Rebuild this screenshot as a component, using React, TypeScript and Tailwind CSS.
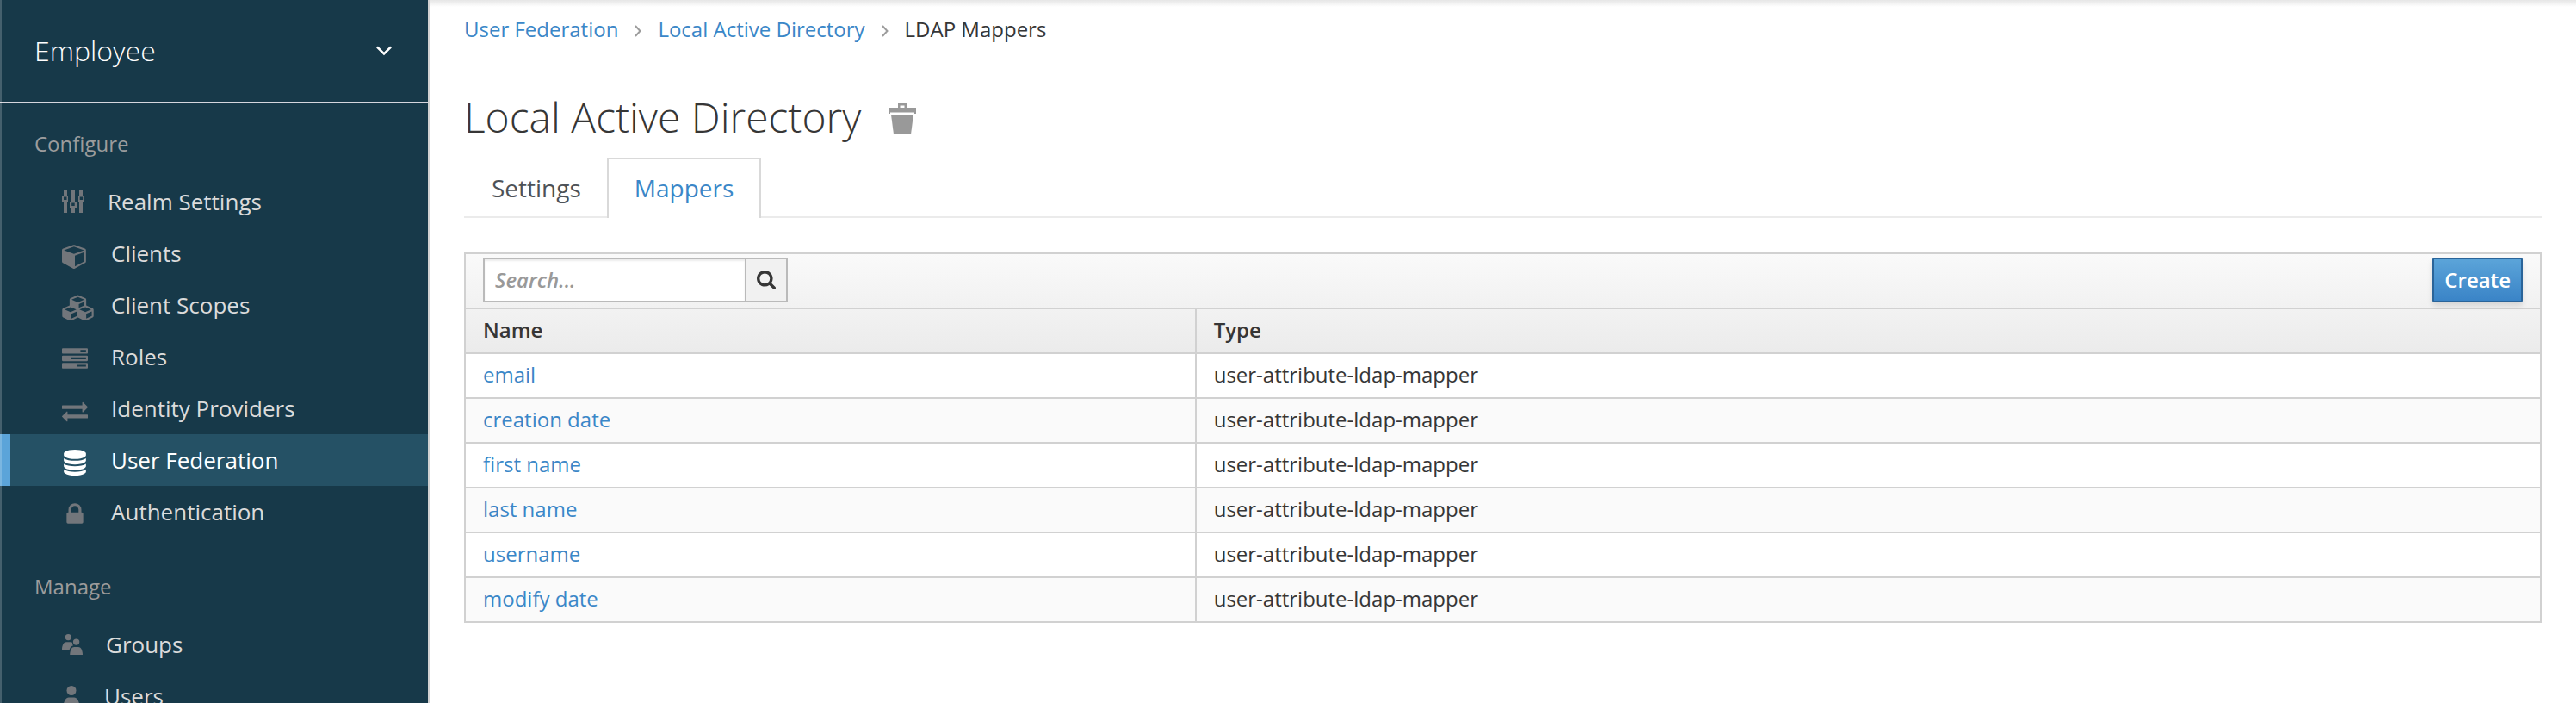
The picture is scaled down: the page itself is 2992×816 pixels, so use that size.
import type { ReactNode } from "react";

type IconProps = { viewBox: string; className: string; children: ReactNode };

function Icon({ viewBox, className, children }: IconProps) {
  return (
    <svg viewBox={viewBox} className={className} fill="currentColor" aria-hidden="true">
      {children}
    </svg>
  );
}

const CUBE =
  "M896 1629l640-349v-636l-640 233v752zm-64-865l698-254-698-254-698 254zm832-252v768q0 35-18 65t-49 47l-704 384q-28 16-61 16t-61-16l-704-384q-31-17-49-47t-18-65v-768q0-40 23-73t61-47l704-256q22-8 44-8t44 8l704 256q38 14 61 47t23 73z";
const CUBES =
  "M576 1664l384-192v-314l-384 164v342zm-64-454l404-173-404-173-404 173zm1088 454l384-192v-314l-384 164v342zm-64-454l404-173-404-173-404 173zm-448-293l384-165v-266l-384 164v267zm-64-379l441-189-441-189-441 189zm1088 518v416q0 36-19 67t-52 47l-448 224q-25 14-57 14t-57-14l-448-224q-4-2-7-4-2 2-7 4l-448 224q-25 14-57 14t-57-14l-448-224q-33-16-52-47t-19-67v-416q0-38 21.5-70t56.5-48l434-186v-400q0-38 21.5-70t56.5-48l448-192q23-10 50-10t50 10l448 192q35 16 56.5 48t21.5 70v400l434 186q36 16 57 48t21 70z";
const TASKS =
  "M1024 1408h640v-128h-640v128zm-384-512h1024v-128h-1024v128zm640-512h384v-128h-384v128zm512 832v256q0 26-19 45t-45 19h-1664q-26 0-45-19t-19-45v-256q0-26 19-45t45-19h1664q26 0 45 19t19 45zm0-512v256q0 26-19 45t-45 19h-1664q-26 0-45-19t-19-45v-256q0-26 19-45t45-19h1664q26 0 45 19t19 45zm0-512v256q0 26-19 45t-45 19h-1664q-26 0-45-19t-19-45v-256q0-26 19-45t45-19h1664q26 0 45 19t19 45z";
const EXCHANGE =
  "M1792 1184v192q0 13-9.5 22.5t-22.5 9.5h-1376v192q0 13-9.5 22.5t-22.5 9.5q-12 0-24-10l-319-320q-9-9-9-22 0-14 9-23l320-320q9-9 23-9 13 0 22.5 9.5t9.5 22.5v192h1376q13 0 22.5 9.5t9.5 22.5zm0-544q0 14-9 23l-320 320q-9 9-23 9-13 0-22.5-9.5t-9.5-22.5v-192h-1376q-13 0-22.5-9.5t-9.5-22.5v-192q0-13 9.5-22.5t22.5-9.5h1376v-192q0-14 9-23t23-9q12 0 24 10l319 319q9 9 9 23z";
const DATABASE =
  "M896 768q237 0 443-43t325-127v170q0 69-103 128t-280 93.5-385 34.5-385-34.5-280-93.5-103-128v-170q119 84 325 127t443 43zm0 768q237 0 443-43t325-127v170q0 69-103 128t-280 93.5-385 34.5-385-34.5-280-93.5-103-128v-170q119 84 325 127t443 43zm0-384q237 0 443-43t325-127v170q0 69-103 128t-280 93.5-385 34.5-385-34.5-280-93.5-103-128v-170q119 84 325 127t443 43zm0-1152q208 0 385 34.5t280 93.5 103 128v128q0 69-103 128t-280 93.5-385 34.5-385-34.5-280-93.5-103-128v-128q0-69 103-128t280-93.5 385-34.5z";
const LOCK =
  "M640 768h512v-192q0-106-75-181t-181-75-181 75-75 181v192zm832 96v576q0 40-28 68t-68 28h-960q-40 0-68-28t-28-68v-576q0-40 28-68t68-28h32v-192q0-184 132-316t316-132 316 132 132 316v192h32q40 0 68 28t28 68z";
const SEARCH =
  "M1216 832q0-185-131.5-316.5t-316.5-131.5-316.5 131.5-131.5 316.5 131.5 316.5 316.5 131.5 316.5-131.5 131.5-316.5zm512 832q0 52-38 90t-90 38q-54 0-90-38l-343-342q-179 124-399 124-143 0-273.5-55.5t-225-150-150-225-55.5-273.5 55.5-273.5 150-225 225-150 273.5-55.5 273.5 55.5 225 150 150 225 55.5 273.5q0 220-124 399l343 343q37 37 37 90z";

function GlyphIcon({ d }: { d: string }) {
  return (
    <Icon viewBox="0 0 1792 1792" className="mt-1.5 h-[30px] w-[30px]">
      <path d={d} />
    </Icon>
  );
}

function SlidersIcon() {
  return (
    <Icon viewBox="0 0 26 26" className="h-[26px] w-[26px]">
      <path
        fillRule="evenodd"
        d="M2 0h4v6h1v7h-1v13h-4v-13h-2v-7h2zM2 7.500v3.500h3.500v-3.500zM11 0h4v13h2v7h-2v6h-4v-6h-2v-7h2zM11.200 14.500v3.500h3.500v-3.500zM20 0h4v6h2v7h-2v13h-4v-13h-1v-7h1zM20.700 7.500v3.500h3.500v-3.500z"
      />
    </Icon>
  );
}

function GroupIcon() {
  return (
    <Icon viewBox="0 0 24 24" className="h-6 w-6">
      <circle cx="7.300" cy="3.600" r="3.600" />
      <path d="M0 18.500C0 12.500 2.200 9.300 5 9.300h5.200c.8 0 1.400.2 1.900.6-.4 1.200.1 2.400.9 3.300-2.300.6-3.900 2.600-4.500 5.300z" />
      <circle cx="16.600" cy="9.100" r="3.700" />
      <path d="M9.200 24.200c0-6 2.200-9.300 5-9.300h4.800c2.800 0 5 3.300 5 9.300z" />
    </Icon>
  );
}

function UserIcon() {
  return (
    <Icon viewBox="0 0 24 30" className="h-[30px] w-6">
      <circle cx="11" cy="8.500" r="5.500" />
      <path d="M1.200 31c0-9 2.800-14.500 6.500-14.500h6.600c3.700 0 6.500 5.500 6.500 14.500z" />
    </Icon>
  );
}

type NavItem = { label: string; icon: ReactNode; slot: string; active?: boolean };

const configure: NavItem[] = [
  { label: "Realm Settings", icon: <SlidersIcon />, slot: "w-8" },
  { label: "Clients", icon: <GlyphIcon d={CUBE} />, slot: "w-9" },
  {
    label: "Client Scopes",
    icon: (
      <Icon viewBox="-64 0 2176 1792" className="mt-1.5 h-[30px] w-[37px] shrink-0">
        <path d={CUBES} />
      </Icon>
    ),
    slot: "w-9",
  },
  { label: "Roles", icon: <GlyphIcon d={TASKS} />, slot: "w-9" },
  { label: "Identity Providers", icon: <GlyphIcon d={EXCHANGE} />, slot: "w-9" },
  { label: "User Federation", icon: <GlyphIcon d={DATABASE} />, slot: "w-9", active: true },
  { label: "Authentication", icon: <GlyphIcon d={LOCK} />, slot: "w-9" },
];

const manage: NavItem[] = [
  { label: "Groups", icon: <GroupIcon />, slot: "w-[30px]" },
  { label: "Users", icon: <UserIcon />, slot: "w-7" },
];

function NavSection({ title, items }: { title: string; items: NavItem[] }) {
  return (
    <section className="mb-2.5 pt-[30px]">
      <h2 className="mb-5 pl-10 text-[24px] leading-[34px] text-[#9c9c9c]">{title}</h2>
      <ul>
        {items.map((item) => (
          <li key={item.label}>
            <a
              href="#"
              aria-current={item.active ? "page" : undefined}
              className={
                item.active
                  ? "flex h-[60px] items-center gap-[21px] border-l-12 border-[#5ba4d9] bg-[#255165] pl-[60px] text-[26px] text-white"
                  : "flex h-[60px] items-center gap-[21px] pl-[72px] text-[26px] text-[#dbdbdb]"
              }
            >
              <span className={`flex shrink-0 items-center ${item.slot} ${item.active ? "text-white" : "text-[#72767b]"}`}>
                {item.icon}
              </span>
              {item.label}
            </a>
          </li>
        ))}
      </ul>
    </section>
  );
}

function Sidebar() {
  return (
    <aside className="relative w-[499px] shrink-0 overflow-hidden border-r-2 border-[#d1d1d1] bg-[#173949]">
      <button
        type="button"
        className="flex h-[120px] w-full items-center justify-between border-b-2 border-[#d6d6de] pr-[42px] pl-10 text-[32px] font-light text-white"
      >
        Employee
        <svg viewBox="0 0 18 12" className="h-3 w-[18px]" fill="none" stroke="currentColor" strokeWidth="2.500" aria-hidden="true">
          <path d="M1 1.500l8 8 8-8" />
        </svg>
      </button>
      <nav>
        <NavSection title="Configure" items={configure} />
        <NavSection title="Manage" items={manage} />
      </nav>
      <div className="pointer-events-none absolute inset-y-0 left-0 w-0.5 bg-white/20" />
    </aside>
  );
}

function Separator() {
  return (
    <svg viewBox="0 0 10 14" className="mt-1 h-3.5 w-2.5" fill="none" stroke="#9c9c9c" strokeWidth="2" aria-hidden="true">
      <path d="M2 1l5.500 6-5.500 6" />
    </svg>
  );
}

const mappers = ["email", "creation date", "first name", "last name", "username", "modify date"];

export default function App() {
  return (
    <div className="flex h-screen overflow-hidden bg-white font-['Open_Sans',sans-serif] text-[24px] text-[#363636]">
      <Sidebar />
      <main className="min-w-0 flex-1 bg-[linear-gradient(#e6e6e6,#ffffff_8px)] px-10">
        <nav aria-label="Breadcrumb" className="flex items-center gap-[18px] pt-4 leading-9">
          <a href="#" className="text-[#3a87c8]">User Federation</a>
          <Separator />
          <a href="#" className="text-[#3a87c8]">Local Active Directory</a>
          <Separator />
          <span>LDAP Mappers</span>
        </nav>

        <div className="mt-[51px] flex items-center gap-8">
          <h1 className="text-[48px] leading-[66px] font-light">Local Active Directory</h1>
          <button type="button" aria-label="Delete" className="mt-1 text-[#999999]">
            <svg viewBox="0 0 32 36" className="h-9 w-8" fill="currentColor" aria-hidden="true">
              <path fillRule="evenodd" d="M11 0h10v5h11v7h-2v-1.500h-28v1.500h-2v-7h11zM13.500 2.500v2.500h5v-2.500z" />
              <path d="M3 13h26l-3 23h-20z" />
            </svg>
          </button>
        </div>

        <div role="tablist" className="mt-3.5 flex h-[70px] border-b-2 border-[#ebebeb] text-[28px]">
          <button type="button" role="tab" aria-selected="false" className="border-l-2 border-transparent px-[30px] pt-0.5 text-[#4d5258]">
            Settings
          </button>
          <button
            type="button"
            role="tab"
            aria-selected="true"
            className="-mb-0.5 border-2 border-b-0 border-[#d9d9d9] bg-white px-[30px] pb-0.5 text-[#3a87c8]"
          >
            Mappers
          </button>
        </div>

        <table className="mt-10 w-full table-fixed border-collapse border-2 border-[#d1d1d1] text-left leading-10">
          <colgroup>
            <col className="w-[35.2%]" />
            <col />
          </colgroup>
          <thead>
            <tr className="bg-linear-to-b from-[#fafafa] to-[#f1f1f1]">
              <td colSpan={2} className="border-2 border-[#d1d1d1] px-5 pt-1 pb-1.5">
                <div className="flex justify-between">
                  <form className="flex h-[52px] border-2 border-[#bababa]">
                    <label htmlFor="search" className="sr-only">Search</label>
                    <input
                      id="search"
                      type="text"
                      placeholder="Search..."
                      className="w-[302px] bg-white px-3 text-[24px] shadow-[inset_0_2px_2px_rgba(0,0,0,0.075)] outline-none placeholder:font-semibold placeholder:text-[#999999] placeholder:italic"
                    />
                    <button type="button" aria-label="Search" className="flex w-12 items-center justify-center border-l-2 border-[#bababa] bg-[#f1f1f1]">
                      <Icon viewBox="64 128 1664 1664" className="h-[22px] w-[22px]">
                        <path d={SEARCH} />
                      </Icon>
                    </button>
                  </form>
                  <button
                    type="button"
                    className="flex h-[52px] items-center rounded-[2px] border-2 border-[#2a6499] bg-linear-to-b from-[#5ba4d9] to-[#3a84c7] px-3 font-semibold text-white shadow-[0_4px_6px_rgba(0,0,0,0.12)]"
                  >
                    Create
                  </button>
                </div>
              </td>
            </tr>
            <tr className="bg-linear-to-b from-[#f2f2f2] to-[#ebebeb]">
              <th scope="col" className="border-2 border-[#d1d1d1] px-5 pt-1 pb-1.5 font-semibold">Name</th>
              <th scope="col" className="border-2 border-[#d1d1d1] px-5 pt-1 pb-1.5 font-semibold">Type</th>
            </tr>
          </thead>
          <tbody>
            {mappers.map((name) => (
              <tr key={name} className="even:bg-[#fafafa]">
                <td className="border-2 border-[#d1d1d1] px-5 pt-1 pb-1.5">
                  <a href="#" className="text-[#3a87c8]">{name}</a>
                </td>
                <td className="border-2 border-[#d1d1d1] px-5 pt-1 pb-1.5">user-attribute-ldap-mapper</td>
              </tr>
            ))}
          </tbody>
        </table>
      </main>
    </div>
  );
}
